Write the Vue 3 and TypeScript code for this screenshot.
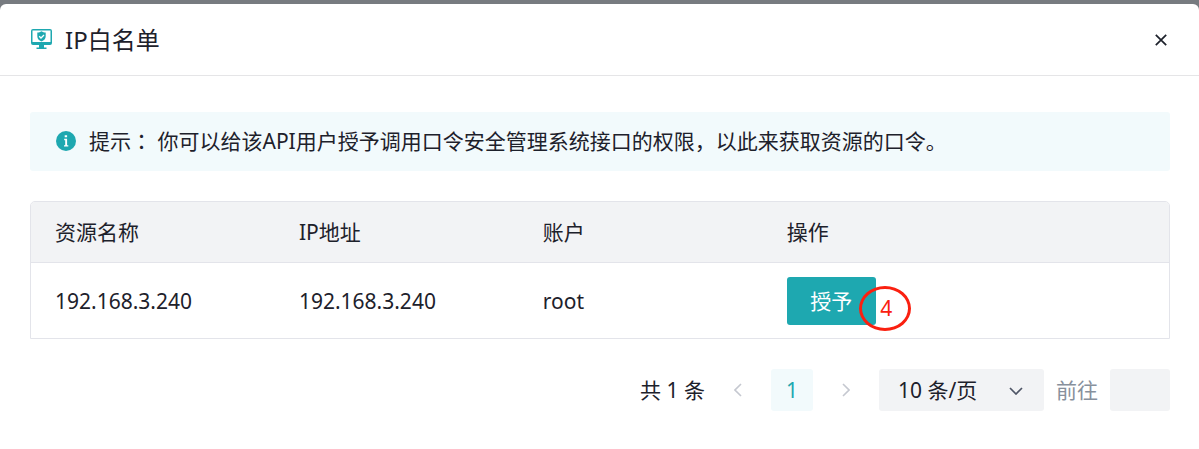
<script setup lang="ts">
import { ref } from 'vue'

interface Resource {
  name: string
  ip: string
  account: string
}

const resources: Resource[] = [
  { name: '192.168.3.240', ip: '192.168.3.240', account: 'root' },
]
const pageSize = ref<number>(10)
const jumpTo = ref<string>('')
</script>

<template>
  <div class="overlay">
    <section class="dialog" role="dialog" aria-labelledby="dialog-title">
      <header class="dialog-header">
        <svg class="title-icon" viewBox="0 0 21 21" aria-hidden="true">
          <path
            fill="currentColor"
            fill-rule="evenodd"
            d="M2 0h17a2 2 0 0 1 2 2v12a2 2 0 0 1-2 2h-6v2.500h2.500v1.500H5.500v-1.500H8V16H2a2 2 0 0 1-2-2V2a2 2 0 0 1 2-2zM1.500 1.500V13h18V1.500z"
          />
          <path fill="currentColor" d="M10.500 2.200c1.200.9 2.600 1.200 4.200 1.200v3.800c0 2.500-1.600 4.200-4.200 5.200-2.600-1-4.200-2.700-4.200-5.200V3.400c1.600 0 3-.3 4.200-1.200z" />
          <path fill="none" stroke="#fff" stroke-width="1.300" d="M8.200 7.200l1.800 1.800 3-3" />
        </svg>
        <h1 id="dialog-title" class="title">IP白名单</h1>
        <button class="close" type="button" aria-label="关闭">
          <svg viewBox="0 0 12 12" aria-hidden="true">
            <path d="M.8.800l10.400 10.400M11.200.800L.8 11.200" fill="none" stroke="currentColor" stroke-width="1.700" />
          </svg>
        </button>
      </header>

      <div class="dialog-body">
        <div class="tip">
          <svg class="tip-icon" viewBox="0 0 20 20" aria-hidden="true">
            <circle cx="10" cy="10" r="10" fill="currentColor" />
            <path fill="#fff" d="M8.700 4.200h2.400v2H8.700zM8.200 7.800h2.900v6.400h1.200v1.400H8v-1.400h1.200v-5h-1z" />
          </svg>
          <p class="tip-text"><span class="tip-label">提示：</span> 你可以给该API用户授予调用口令安全管理系统接口的权限，以此来获取资源的口令。</p>
        </div>

        <div class="table-frame">
          <table class="table">
            <thead>
              <tr>
                <th scope="col">资源名称</th>
                <th scope="col">IP地址</th>
                <th scope="col">账户</th>
                <th scope="col" class="col-action">操作</th>
              </tr>
            </thead>
            <tbody>
              <tr v-for="item in resources" :key="item.ip">
                <td>{{ item.name }}</td>
                <td>{{ item.ip }}</td>
                <td>{{ item.account }}</td>
                <td>
                  <div class="action">
                    <button class="grant" type="button">授予</button>
                    <span class="step">4</span>
                  </div>
                </td>
              </tr>
            </tbody>
          </table>
        </div>

        <nav class="pagination" aria-label="分页">
          <span class="total">共 1 条</span>
          <button class="arrow" type="button" aria-label="上一页" disabled>
            <svg viewBox="0 0 8 14" aria-hidden="true">
              <path d="M7 1L1 7l6 6" fill="none" stroke="currentColor" stroke-width="1.600" />
            </svg>
          </button>
          <button class="page" type="button" aria-current="page">1</button>
          <button class="arrow" type="button" aria-label="下一页" disabled>
            <svg viewBox="0 0 8 14" aria-hidden="true">
              <path d="M1 1l6 6-6 6" fill="none" stroke="currentColor" stroke-width="1.600" />
            </svg>
          </button>
          <div class="size">
            <select v-model="pageSize" class="size-select" aria-label="每页条数">
              <option :value="10">10 条/页</option>
            </select>
            <svg class="size-arrow" viewBox="0 0 14 8" aria-hidden="true">
              <path d="M1 1l6 6 6-6" fill="none" stroke="currentColor" stroke-width="1.700" />
            </svg>
          </div>
          <label class="jump-label" for="jump">前往</label>
          <input id="jump" v-model="jumpTo" class="jump" type="text" />
        </nav>
      </div>
    </section>
  </div>
</template>

<style>
body {
  margin: 0;
  background: #777b80;
}
</style>

<style scoped>
.overlay,
.overlay * {
  box-sizing: border-box;
}

.overlay {
  display: flex;
  min-height: 100vh;
  padding-top: 4px;
  background: #777b80;
  color: #1d212b;
  font-family: "Noto Sans", "Noto Sans CJK SC", sans-serif;
  font-size: 21px;
  line-height: 30px;
}

.overlay button,
.overlay select,
.overlay input {
  margin: 0;
  padding: 0;
  border: 0;
  background: none;
  color: inherit;
  font: inherit;
}

.dialog {
  flex: 1;
  min-width: 0;
  border-radius: 6px 6px 0 0;
  background: #fff;
}

.dialog-header {
  display: flex;
  align-items: center;
  height: 72px;
  padding: 0 29px 0 31px;
  border-bottom: 1px solid #e5e5e7;
}

.title-icon {
  width: 21px;
  height: 21px;
  margin-right: 13px;
  color: #1ea8b0;
}

.title {
  flex: 1;
  margin: 0;
  font-size: 24px;
  font-weight: 400;
  line-height: 36px;
}

.overlay .close {
  display: flex;
  padding: 3px;
}

.close svg {
  width: 12px;
  height: 12px;
}

.dialog-body {
  padding: 36px 29px 0 30px;
}

.tip {
  display: flex;
  align-items: center;
  gap: 13px;
  padding: 14px 26px 15px;
  border-radius: 3px;
  background: #f2fafc;
}

.tip-icon {
  flex: none;
  width: 20px;
  height: 20px;
  color: #1ea8b0;
}

.tip-text {
  margin: 0;
}

.tip-label {
  font-family: "Noto Sans CJK TC", sans-serif;
  line-height: 1;
}

.table-frame {
  margin-top: 30px;
  overflow: hidden;
  border: 1px solid #e3e4ea;
  border-radius: 5px 5px 0 0;
}

.table {
  width: 100%;
  border-collapse: separate;
  border-spacing: 0;
  table-layout: fixed;
}

.table th,
.table td {
  padding: 0 24px;
  text-align: left;
  font-weight: 400;
}

.table th {
  height: 61px;
  border-bottom: 1px solid #e3e4ea;
  background: #f2f3f5;
}

.table td {
  height: 75px;
}

.col-action {
  width: 35.7%;
}

.action {
  position: relative;
  width: max-content;
}

.overlay .grant {
  display: block;
  min-width: 89px;
  height: 48px;
  padding: 0 22px;
  border-radius: 3px;
  background: #1ea8b0;
  color: #fff;
}

.step {
  position: absolute;
  top: 9px;
  left: 72px;
  width: 52px;
  height: 45px;
  padding-left: 3px;
  border: 3px solid #fa2010;
  border-radius: 50%;
  color: #fa2010;
  line-height: 39px;
  text-align: center;
}

.pagination {
  display: flex;
  align-items: center;
  justify-content: flex-end;
  margin-top: 30px;
  padding-bottom: 30px;
}

.overlay .arrow {
  display: flex;
  align-items: center;
  justify-content: center;
  width: 66px;
  height: 42px;
  color: #c5c8d0;
}

.arrow svg {
  width: 8px;
  height: 14px;
}

.overlay .page {
  width: 42px;
  height: 42px;
  border-radius: 3px;
  background: #f2fafc;
  color: #1ea8b0;
}

.size {
  position: relative;
}

.overlay .size-select {
  display: block;
  width: 165px;
  height: 42px;
  padding: 0 45px 0 19px;
  appearance: none;
  border-radius: 3px;
  background: #f2f3f5;
}

.size-arrow {
  position: absolute;
  top: 18px;
  right: 21px;
  width: 14px;
  height: 8px;
  color: #4e5566;
  pointer-events: none;
}

.jump-label {
  margin: 0 12px;
  color: #87909c;
}

.overlay .jump {
  width: 60px;
  height: 42px;
  padding: 0 12px;
  border-radius: 3px;
  background: #f2f3f5;
}
</style>
